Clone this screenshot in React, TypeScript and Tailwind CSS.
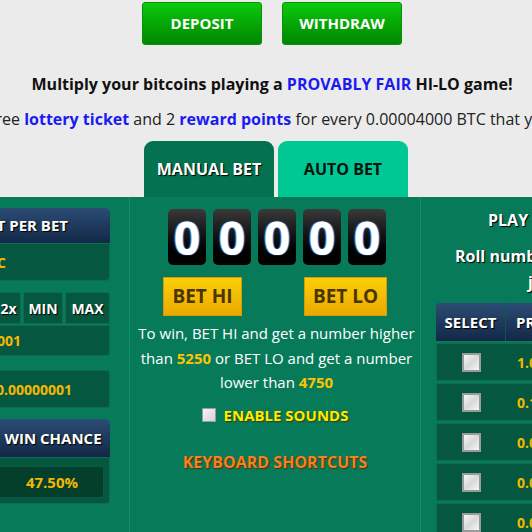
const headerCls =
  "bg-gradient-to-b from-[#2c4c74] to-[#132848] text-white font-bold text-[15px] [text-shadow:1px_1px_1px_#000]";
const boxCls = "bg-[#05583f] border border-[#0d6d51]";

function Digit() {
  return (
    <div className="w-[38px] h-[56px] rounded-[5px] bg-gradient-to-b from-[#3a3a3a] via-[#111] to-[#000] flex items-center justify-center">
      <span className="text-white text-[46px] font-bold leading-none [text-shadow:-1px_0_1px_#3d8bff,1px_0_1px_#8cc4ff]">
        0
      </span>
    </div>
  );
}

function Check() {
  return (
    <div className="w-[19px] h-[19px] border-2 border-[#9a9a9a] bg-gradient-to-br from-[#f4f4f4] via-[#d9d9d9] to-[#f7f7f7]" />
  );
}

const prices = ["1.00000000", "0.10000000", "0.01000000", "0.00100000", "0.00010000"];

export default function App() {
  return (
    <div className="w-[532px] h-[532px] overflow-hidden bg-[#ebebeb] font-['Open_Sans',sans-serif]">
      <div className="w-[544px] flex flex-col">
        <div className="flex justify-center gap-[20px] pt-[2px]">
          <button className="w-[120px] h-[43px] rounded-[3px] border border-[#0a8f0a] bg-gradient-to-b from-[#0ccb0c] to-[#028502] text-white font-bold text-[15px]">
            DEPOSIT
          </button>
          <button className="w-[120px] h-[43px] rounded-[3px] border border-[#0a8f0a] bg-gradient-to-b from-[#0ccb0c] to-[#028502] text-white font-bold text-[15px]">
            WITHDRAW
          </button>
        </div>

        <p className="mt-[27px] text-center text-[16px] font-bold leading-[24px] text-[#111]">
          Multiply your bitcoins playing a <span className="text-[#1b1bf0]">PROVABLY FAIR</span> HI-LO game!
        </p>
        <div className="mt-[11px] flex justify-center pr-[26px] whitespace-nowrap text-[16px] leading-[24px] text-[#222]">
          <span>
            You get 1 free <b className="text-[#1b1bf0]">lottery ticket</b> and 2{" "}
            <b className="text-[#1b1bf0]">reward points</b> for every 0.00004000 BTC that you wager
          </span>
        </div>

        <div className="mt-[10px] flex pl-[144px] gap-[4px] h-[56px]">
          <div className="w-[130px] rounded-t-[9px] bg-[#04714f] flex items-center justify-center text-white font-bold text-[16px] [text-shadow:1px_1px_1px_#000]">
            MANUAL BET
          </div>
          <div className="w-[130px] rounded-t-[9px] bg-[#00c894] flex items-center justify-center text-[#08130f] font-bold text-[16px]">
            AUTO BET
          </div>
        </div>
      </div>

      <div className="flex h-[340px] w-[700px] ml-[-14px] bg-[#077a5a]">
        <div className="w-[144px] shrink-0 border-r border-[#12906d] pl-[10px] pr-[19px] pt-[11px] flex flex-col">
          <div className={`${headerCls} h-[35px] rounded-t-[5px] flex items-center justify-end pr-[42px] whitespace-nowrap`}>
            MAX PROFIT PER BET
          </div>
          <div className={`${boxCls} h-[38px] rounded-b-[4px] flex items-center justify-end pr-[103px] text-[#f5b800] font-bold text-[14px] whitespace-nowrap`}>
            0.05 BTC
          </div>

          <div className="mt-[11px] flex gap-[2px] h-[32px] text-white font-bold text-[14px] [text-shadow:1px_1px_1px_#000]">
            <div className={`${boxCls} w-[25px] rounded-tl-[3px] flex items-center justify-center`}>2x</div>
            <div className={`${boxCls} w-[40px] flex items-center justify-center`}>MIN</div>
            <div className={`${boxCls} flex-1 rounded-tr-[3px] flex items-center justify-center`}>MAX</div>
          </div>
          <div className={`${boxCls} mt-[1px] h-[31px] rounded-b-[3px] flex items-center justify-end pr-[88px] text-[#f5b800] font-bold text-[14px] whitespace-nowrap`}>
            0.00000001
          </div>

          <div className={`${boxCls} mt-[14px] h-[38px] rounded-[3px] flex items-center justify-end pr-[37px] text-[#f5b800] font-bold text-[14px] whitespace-nowrap`}>
            0.00000001
          </div>

          <div className={`${headerCls} mt-[11px] h-[38px] rounded-t-[5px] flex items-center justify-center`}>
            WIN CHANCE
          </div>
          <div className={`${boxCls} h-[47px] rounded-b-[4px] pr-[5px] pt-[8px]`}>
            <div className="h-[32px] rounded-r-[3px] bg-[#043f2c] border border-l-0 border-[#0a5a41] flex items-center justify-center pl-[4px] text-[#f5b800] font-bold text-[15px]">
              47.50%
            </div>
          </div>
        </div>

        <div className="w-[291px] shrink-0 border-r border-[#12906d] flex flex-col items-center pt-[12px]">
          <div className="flex gap-[7px] pl-[4px]">
            <Digit />
            <Digit />
            <Digit />
            <Digit />
            <Digit />
          </div>
          <div className="w-full flex justify-between px-[33px] mt-[12px]">
            <button className="w-[79px] h-[39px] bg-gradient-to-b from-[#fbcf0a] to-[#eaa900] text-[#4a3500] font-bold text-[19px] border border-[#d89c00]">
              BET HI
            </button>
            <button className="w-[83px] h-[39px] bg-gradient-to-b from-[#fbcf0a] to-[#eaa900] text-[#4a3500] font-bold text-[19px] border border-[#d89c00]">
              BET LO
            </button>
          </div>
          <p className="mt-[5px] text-center text-white text-[15px] leading-[24.5px] pl-[3px]">
            To win, BET HI and get a number higher
            <br />
            than <b className="text-[#fcc400]">5250</b> or BET LO and get a number
            <br />
            lower than <b className="text-[#fcc400]">4750</b>
          </p>
          <div className="mt-[9px] flex items-center gap-[8px]">
            <div className="w-[14px] h-[14px] border border-[#9a9a9a] bg-gradient-to-br from-[#f4f4f4] to-[#d4d4d4]" />
            <span className="text-[#ffea00] font-bold text-[15px] [text-shadow:1px_1px_1px_#3a3a00]">ENABLE SOUNDS</span>
          </div>
          <div className="mt-[24px] text-[#f5821f] font-bold text-[16px] [text-shadow:1px_1px_1px_#5a2a00]">
            KEYBOARD SHORTCUTS
          </div>
        </div>

        <div className="flex-1 pl-[15px] pt-[11px] flex flex-col text-white font-bold text-[16px] [text-shadow:1px_1px_1px_#000] whitespace-nowrap">
          <div className="pl-[52px] leading-[24px]">PLAY FOR JACKPOTS</div>
          <div className="mt-[12px] pl-[19px] leading-[24px]">Roll number 8888 to win the</div>
          <div className="mt-[2px] pl-[92px] leading-[24px] underline">jackpot</div>
          <div className="mt-[9px] w-[200px] flex flex-col gap-[2px]">
            <div className={`${headerCls} h-[38px] rounded-t-[4px] flex text-[14px]`}>
              <div className="w-[70px] border-r border-[#0c5a45] flex items-center justify-center">SELECT</div>
              <div className="flex-1 flex items-center pl-[10px]">PRICE</div>
            </div>
            {prices.map((p) => (
              <div key={p} className={`${boxCls} h-[38px] flex [text-shadow:none]`}>
                <div className="w-[70px] border-r border-[#0c5a45] flex items-center justify-center">
                  <Check />
                </div>
                <div className="flex-1 flex items-center pl-[10px] text-[#f5b800] text-[14px] font-bold">{p}</div>
              </div>
            ))}
          </div>
        </div>
      </div>
    </div>
  );
}
